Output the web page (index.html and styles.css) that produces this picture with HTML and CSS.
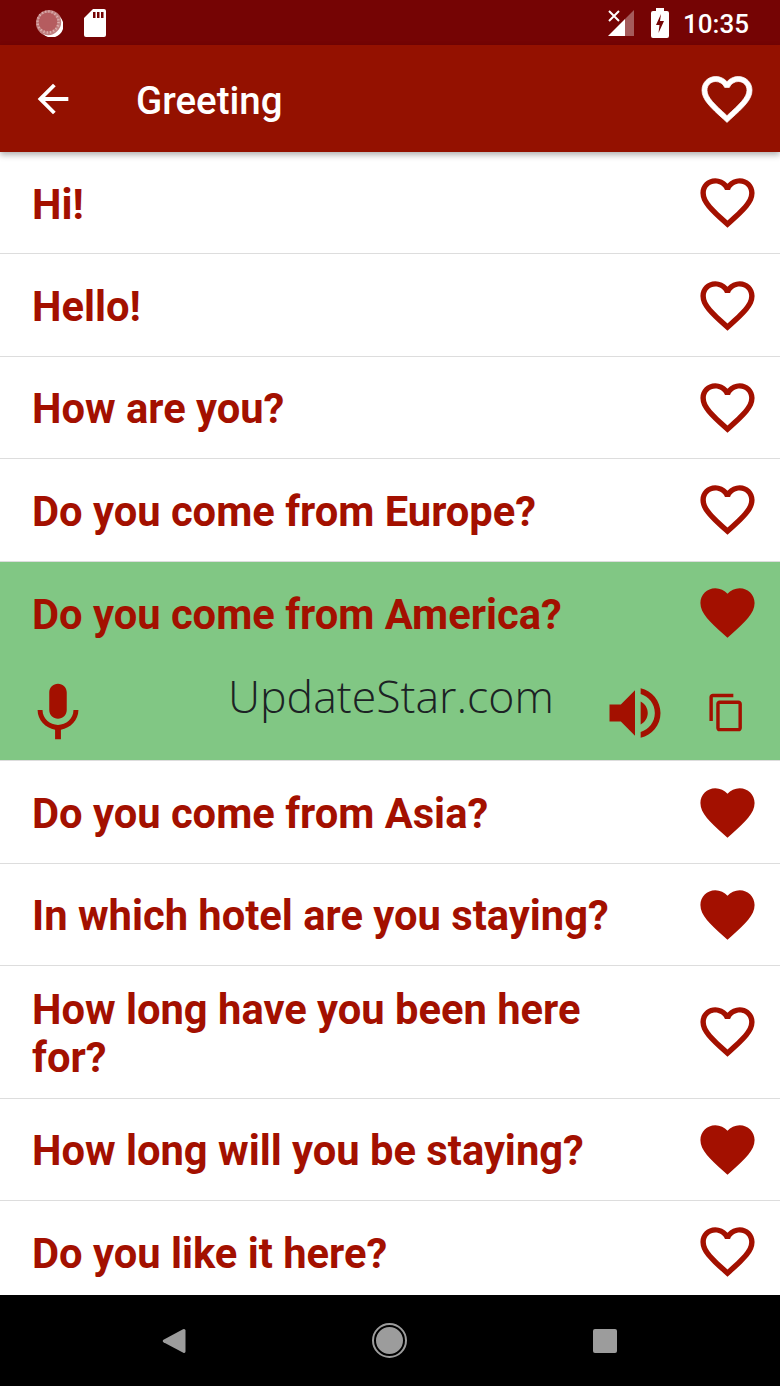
FILE: index.html
```html
<!DOCTYPE html>
<html lang="en">
<head>
    <meta charset="UTF-8">
    <meta name="viewport" content="width=device-width, initial-scale=1.0">
    <title>Greeting</title>
    <link rel="stylesheet" href="styles.css">
</head>
<body>
    <svg class="icon-defs" width="0" height="0">
        <symbol id="heart-line" viewBox="0 0 24 24"><path d="M16.5 3c-1.74 0-3.41.81-4.5 2.09C10.91 3.81 9.24 3 7.5 3 4.42 3 2 5.42 2 8.5c0 3.78 3.4 6.86 8.55 11.54L12 21.35l1.45-1.32C18.6 15.36 22 12.28 22 8.5 22 5.42 19.58 3 16.5 3zm-4.4 15.55l-.1.1-.1-.1C7.14 14.24 4 11.39 4 8.5 4 6.5 5.5 5 7.5 5c1.54 0 3.04.99 3.57 2.36h1.87C13.46 5.99 14.96 5 16.5 5c2 0 3.5 1.5 3.5 3.5 0 2.89-3.14 5.74-7.9 10.05z"/></symbol>
        <symbol id="heart-full" viewBox="0 0 24 24"><path d="M12 21.35l-1.45-1.32C5.4 15.36 2 12.28 2 8.5 2 5.42 4.42 3 7.5 3c1.74 0 3.41.81 4.5 2.09C13.09 3.81 14.76 3 16.5 3 19.58 3 22 5.42 22 8.5c0 3.78-3.4 6.86-8.55 11.54L12 21.35z"/></symbol>
    </svg>

    <div class="status-bar">
        <div class="status-left">
            <svg class="st-loader" width="28" height="28" viewBox="0 0 28 28">
                <circle cx="14" cy="14" r="13" fill="#c08080"/>
                <circle cx="13" cy="13" r="9.500" fill="#b55c5f"/>
                <circle cx="13" cy="13" r="10.500" fill="none" stroke="#dcaeae" stroke-width="2.500" stroke-dasharray="1.200 2.100"/>
                <path d="M25 8a13 13 0 0 1-17 17a12 12 0 0 0 17-17z" fill="#fff"/>
            </svg>
            <svg class="st-sd" width="22" height="28" viewBox="0 0 22 28">
                <path d="M9 0h11a2 2 0 0 1 2 2v24a2 2 0 0 1-2 2H2a2 2 0 0 1-2-2V9z" fill="#fff"/>
                <path d="M9 3h2.500v6H9zM13 3h2.500v6H13zM17 3h2.500v6H17z" fill="#750404"/>
            </svg>
        </div>
        <div class="status-right">
            <svg class="st-signal" width="28" height="28" viewBox="0 0 28 28">
                <path d="M26 1v26h-9V10z" fill="#fff" opacity="0.35"/>
                <path d="M17 10v17H0z" fill="#fff"/>
                <path d="M1 2l10 10M11 2L1 12" stroke="#fff" stroke-width="2" fill="none"/>
            </svg>
            <svg class="st-battery" width="18" height="30" viewBox="0 0 18 30">
                <path d="M5 0h8v3h3a2 2 0 0 1 2 2v23a2 2 0 0 1-2 2H2a2 2 0 0 1-2-2V5a2 2 0 0 1 2-2h3z" fill="#fff"/>
                <path d="M10 6l-5 11h3.500l-1 8 5.500-12H9z" fill="#750404"/>
            </svg>
            <span class="clock">10:35</span>
        </div>
    </div>

    <header class="toolbar">
        <svg class="back-icon" viewBox="0 0 24 24"><path d="M20 11H7.830l5.590-5.590L12 4l-8 8 8 8 1.410-1.410L7.830 13H20v-2z"/></svg>
        <h1 class="toolbar-title">Greeting</h1>
        <svg class="heart heart-white"><use href="#heart-line"/></svg>
    </header>

    <main class="phrase-list">
        <div class="phrase">
            <p class="phrase-text">Hi!</p>
            <svg class="heart"><use href="#heart-line"/></svg>
        </div>
        <div class="phrase">
            <p class="phrase-text">Hello!</p>
            <svg class="heart"><use href="#heart-line"/></svg>
        </div>
        <div class="phrase">
            <p class="phrase-text">How are you?</p>
            <svg class="heart"><use href="#heart-line"/></svg>
        </div>
        <div class="phrase">
            <p class="phrase-text">Do you come from Europe?</p>
            <svg class="heart"><use href="#heart-line"/></svg>
        </div>
        <div class="phrase-open">
            <div class="phrase phrase-head">
                <p class="phrase-text">Do you come from America?</p>
                <svg class="heart"><use href="#heart-full"/></svg>
            </div>
            <div class="phrase-actions">
                <svg class="mic-icon" viewBox="0 0 24 24"><path d="M12 14c1.660 0 2.990-1.340 2.990-3L15 5c0-1.660-1.340-3-3-3S9 3.340 9 5v6c0 1.660 1.340 3 3 3zm5.300-3c0 3-2.540 5.100-5.300 5.100S6.700 14 6.700 11H5c0 3.410 2.720 6.230 6 6.720V21h2v-3.280c3.280-.48 6-3.300 6-6.720h-1.700z"/></svg>
                <svg class="sound-icon" viewBox="0 0 24 24"><path d="M3 9v6h4l5 5V4L7 9H3zm13.500 3c0-1.770-1.020-3.290-2.500-4.030v8.050c1.480-.73 2.500-2.250 2.500-4.020zM14 3.230v2.060c2.890.86 5 3.540 5 6.710s-2.110 5.850-5 6.710v2.060c4.010-.91 7-4.490 7-8.770s-2.990-7.860-7-8.770z"/></svg>
                <svg class="copy-icon" viewBox="0 0 24 24"><path d="M16 1H4c-1.100 0-2 .9-2 2v14h2V3h12V1zm3 4H8c-1.100 0-2 .9-2 2v14c0 1.100.9 2 2 2h11c1.100 0 2-.9 2-2V7c0-1.100-.9-2-2-2zm0 16H8V7h11v14z"/></svg>
            </div>
            <span class="watermark">UpdateStar.com</span>
        </div>
        <div class="phrase">
            <p class="phrase-text">Do you come from Asia?</p>
            <svg class="heart"><use href="#heart-full"/></svg>
        </div>
        <div class="phrase">
            <p class="phrase-text">In which hotel are you staying?</p>
            <svg class="heart"><use href="#heart-full"/></svg>
        </div>
        <div class="phrase phrase-tall">
            <p class="phrase-text">How long have you been here for?</p>
            <svg class="heart"><use href="#heart-line"/></svg>
        </div>
        <div class="phrase">
            <p class="phrase-text">How long will you be staying?</p>
            <svg class="heart"><use href="#heart-full"/></svg>
        </div>
        <div class="phrase">
            <p class="phrase-text">Do you like it here?</p>
            <svg class="heart"><use href="#heart-line"/></svg>
        </div>
    </main>

    <footer class="nav-bar">
        <svg width="24" height="26" viewBox="0 0 24 26"><path d="M22 1a1.500 1.500 0 0 1 1.500 1.500v21a1.500 1.500 0 0 1-2.200 1.300L1.500 14.300a1.500 1.500 0 0 1 0-2.600L21 1.200z" fill="#9c9c9c"/></svg>
        <div class="nav-home"></div>
        <div class="nav-square"></div>
    </footer>
</body>
</html>
```

FILE: styles.css
```css
body {
    font-family: Roboto, "Liberation Sans", sans-serif;
    background-color: #fff;
    margin: 0;
    padding: 0;
    width: 780px;
    height: 1386px;
    overflow: hidden;
    display: flex;
    flex-direction: column;
}
.icon-defs {
    display: none;
}
.status-bar {
    background-color: #750404;
    height: 45px;
    display: flex;
    justify-content: space-between;
    align-items: center;
    padding: 0 31px 0 35px;
    flex-shrink: 0;
}
.status-left {
    display: flex;
    align-items: center;
    gap: 21px;
}
.status-right {
    display: flex;
    align-items: center;
}
.st-signal {
    margin-right: 15px;
}
.st-battery {
    margin-right: 14px;
}
.clock {
    color: #fff;
    font-size: 26px;
    font-weight: 500;
    margin-top: 2px;
}
.toolbar {
    background-color: #941100;
    height: 107px;
    display: flex;
    align-items: center;
    padding: 0 23px 0 30px;
    box-shadow: 0px 3px 6px rgba(0, 0, 0, 0.3);
    position: relative;
    z-index: 1;
    flex-shrink: 0;
}
.back-icon {
    width: 46px;
    height: 46px;
    fill: #fff;
}
.toolbar-title {
    flex: 1;
    color: #fff;
    font-size: 38.500px;
    font-weight: 500;
    margin: 3px 0 0 60px;
}
.heart {
    width: 65px;
    height: 65px;
    fill: #a31000;
    flex-shrink: 0;
}
.heart-white {
    width: 60px;
    height: 60px;
    fill: #fff;
    stroke: #fff;
    stroke-width: 0.3;
}
.phrase-list {
    flex: 1;
    overflow: hidden;
}
.phrase {
    display: flex;
    align-items: center;
    justify-content: space-between;
    min-height: 102.400px;
    padding: 0 20px 0 32px;
    box-sizing: border-box;
    border-bottom: 1px solid #ddd;
}
.phrase-text {
    margin: 4px 0 0;
    max-width: 590px;
    color: #a31000;
    font-size: 41.700px;
    font-weight: 700;
    line-height: 48px;
}
.phrase-tall {
    min-height: 132.500px;
}
.phrase-open {
    background-color: #81c784;
    height: 199.800px;
    position: relative;
    border-bottom: 1px solid #ddd;
    box-sizing: border-box;
}
.phrase-head {
    border-bottom: none;
}
.phrase-actions {
    display: flex;
    align-items: center;
    padding: 14px 30px 0 23px;
}
.mic-icon {
    width: 70px;
    height: 70px;
    fill: #a31000;
    margin-right: 508px;
}
.sound-icon {
    width: 68px;
    height: 68px;
    fill: #a31000;
}
.copy-icon {
    width: 41px;
    height: 41px;
    fill: #a31000;
    margin-left: 37px;
}
.watermark {
    position: absolute;
    left: 228px;
    top: 104px;
    font-family: "Open Sans", sans-serif;
    font-size: 44.600px;
    font-weight: 350;
    line-height: 60px;
    color: #1c2224;
}
.nav-bar {
    background-color: #000;
    height: 91px;
    display: flex;
    align-items: center;
    padding: 0 162px;
    justify-content: space-between;
    flex-shrink: 0;
}
.nav-home {
    width: 27px;
    height: 27px;
    border-radius: 50%;
    background-color: #9c9c9c;
    border: 2px solid #000;
    outline: 2px solid #9c9c9c;
    margin-left: -1px;
}
.nav-square {
    width: 24px;
    height: 24px;
    border-radius: 2px;
    background-color: #9c9c9c;
    margin-right: 1px;
}
```
